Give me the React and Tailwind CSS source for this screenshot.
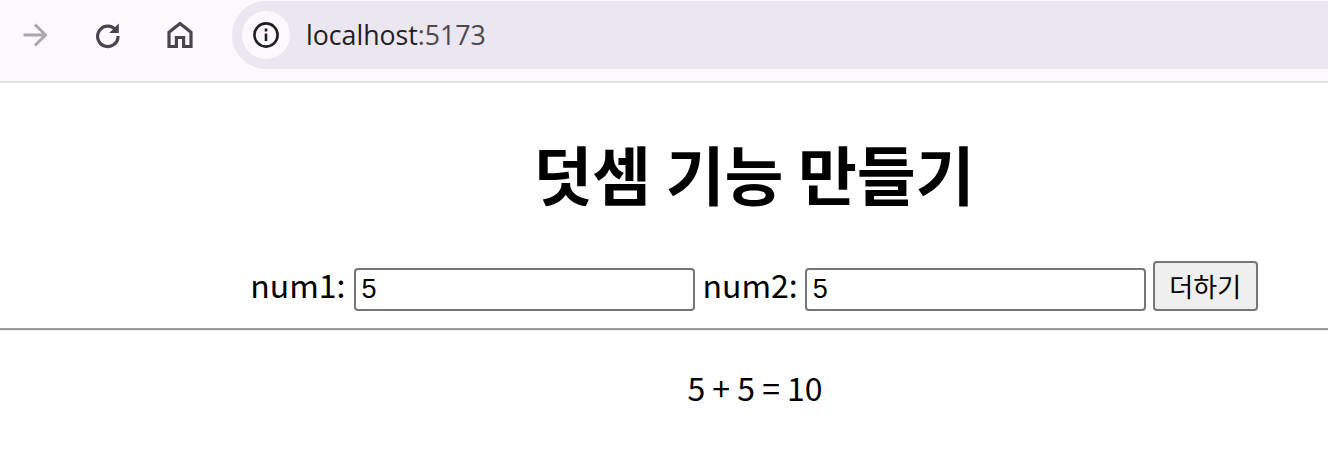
import React from "react";

const Toolbar = () => (
  <div className="flex h-[83px] items-start border-b-2 border-[#e5e0ea] bg-[#fbf8fe]">
    <div className="flex h-[70px] w-[232px] items-center pl-[21px] text-[#49454f]">
      <svg width="30" height="30" viewBox="0 0 30 30" fill="none" stroke="#aaa7ae" strokeWidth="3" strokeLinecap="square" className="mr-[42px]">
        <path d="M4 15h20M15 5.5l9.5 9.5-9.5 9.5" />
      </svg>
      <svg width="30" height="30" viewBox="0 0 30 30" fill="none" stroke="#49454f" strokeWidth="3.2" className="mr-[42px]">
        <path d="M23.6 11.2A10.2 10.2 0 1 0 25 16" />
        <path d="M25.8 3.5v9.6h-9.6" fill="#49454f" strokeWidth="0" />
      </svg>
      <svg width="30" height="30" viewBox="0 0 30 30" fill="none" stroke="#49454f" strokeWidth="3.2">
        <path d="M4 26.5V12.2L15 3.5l11 8.7v14.3h-7.4v-9h-7.2v9z" />
      </svg>
    </div>
    <div className="mt-px flex h-[68px] flex-1 items-center rounded-l-[34px] bg-[#ebe6f0] pl-[10px]">
      <div className="flex h-12 w-12 items-center justify-center rounded-full bg-[#fbf8fe]">
        <svg width="28" height="28" viewBox="0 0 28 28" fill="none" stroke="#1f1f1f" strokeWidth="2.6">
          <circle cx="14" cy="14" r="11.6" />
          <path d="M14 12.5v7.5M14 7.6v2.8" />
        </svg>
      </div>
      <span className="ml-[16px] font-['Open_Sans',sans-serif] text-[26.7px] text-[#1f1f1f]">
        localhost<span className="text-[#4a4a4f]">:5173</span>
      </span>
    </div>
  </div>
);

const App = () => (
  <div className="h-[464px] w-[1328px] overflow-hidden bg-white font-['Noto_Sans_CJK_KR','Noto_Sans',sans-serif] text-black">
    <Toolbar />
    <div className="flex flex-col items-center pl-[180px]">
      <h1 className="mt-[43px] text-[64px] leading-[92px] font-bold">덧셈 기능 만들기</h1>
      <form className="mt-[43px] flex h-[50px] items-start text-[32px]">
        <label htmlFor="num1" className="mt-[-2px] mr-2 leading-[50px]">num1:</label>
        <input id="num1" defaultValue="5" className="mt-[7px] h-[43px] w-[341px] rounded-[4px] border-2 border-[#767676] px-[6px] font-['Liberation_Sans',sans-serif] text-[27px]" />
        <label htmlFor="num2" className="mt-[-2px] mr-[7px] ml-2 leading-[50px]">num2:</label>
        <input id="num2" defaultValue="5" className="mt-[7px] h-[43px] w-[341px] rounded-[4px] border-2 border-[#767676] px-[6px] font-['Liberation_Sans',sans-serif] text-[27px]" />
        <button type="button" className="ml-[7px] h-[50px] w-[105px] rounded-[4px] border-2 border-[#767676] bg-[#efefef] text-[26px] leading-none">더하기</button>
      </form>
    </div>
    <hr className="mt-[17px] border-t-2 border-b border-t-[#9a9a9a] border-b-[#eeeeee]" />
    <p className="mt-[30px] pl-[182px] text-center text-[32px] leading-[52px]">5 + 5 = 10</p>
  </div>
);

export default App;
